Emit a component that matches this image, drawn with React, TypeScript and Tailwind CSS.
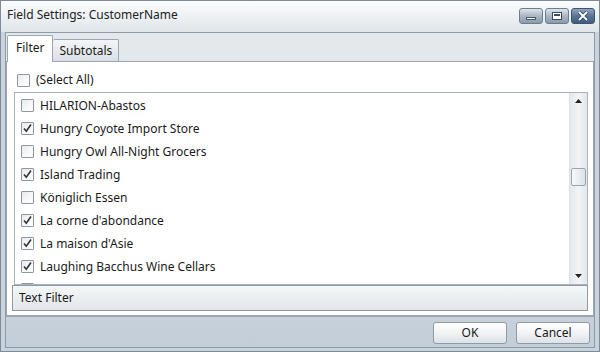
import { useState } from "react";

const items = [
  { label: "HILARION-Abastos", checked: false },
  { label: "Hungry Coyote Import Store", checked: true },
  { label: "Hungry Owl All-Night Grocers", checked: false },
  { label: "Island Trading", checked: true },
  { label: "Königlich Essen", checked: false },
  { label: "La corne d'abondance", checked: true },
  { label: "La maison d'Asie", checked: true },
  { label: "Laughing Bacchus Wine Cellars", checked: true },
];

function Check({ checked }: { checked: boolean }) {
  return (
    <span className="relative w-[13px] h-[13px] shrink-0 border border-[#8f98a2] rounded-[1px] bg-gradient-to-br from-[#e6e9ec] via-[#f6f7f8] to-white">
      {checked && (
        <svg width="11" height="11" viewBox="0 0 11 11" className="absolute left-0 top-0">
          <path d="M2 5.5 L4.3 8.2 L9 1.5" fill="none" stroke="#333" strokeWidth="1.6" />
        </svg>
      )}
    </span>
  );
}

function TitleButton({ kind }: { kind: "min" | "max" | "close" }) {
  const close = kind === "close";
  return (
    <div
      className={
        "w-[24px] h-[16px] rounded-[3px] border flex items-center justify-center " +
        (close
          ? "border-[#3c5470] bg-gradient-to-b from-[#8fa5bd] via-[#5b7595] to-[#3f5b7d]"
          : "border-[#6d7d8e] bg-gradient-to-b from-[#dfe5eb] via-[#a9b6c4] to-[#8c9bab]")
      }
    >
      {kind === "min" && <span className="block w-[10px] h-[3px] mt-[5px] bg-white border border-[#4a5868]" />}
      {kind === "max" && (
        <span className="block w-[10px] h-[8px] border border-[#3f4c5a] bg-white">
          <span className="block mx-auto mt-[1px] w-[6px] h-[2px] bg-[#3f4c5a]" />
        </span>
      )}
      {kind === "close" && (
        <svg width="12" height="10" viewBox="0 0 12 10">
          <path d="M2 1 L10 9 M10 1 L2 9" stroke="#2b3f57" strokeWidth="3.4" />
          <path d="M2 1 L10 9 M10 1 L2 9" stroke="white" strokeWidth="2" />
        </svg>
      )}
    </div>
  );
}

export default function App() {
  const [tab, setTab] = useState<"Filter" | "Subtotals">("Filter");
  const font = { fontFamily: "'Noto Sans', 'Open Sans', sans-serif" };

  return (
    <div
      className="w-[600px] h-[352px] border border-[#7f8b97] bg-[#c9d3dd] flex flex-col text-[12px] text-[#1b1b1b] overflow-hidden"
      style={font}
    >
      {/* Title bar */}
      <div className="h-[31px] shrink-0 flex items-center pl-[6px] pr-[4px] bg-gradient-to-b from-[#fbfcfd] via-[#eef1f4] to-[#dfe5ea]">
        <span className="text-[12px] text-[#222] -mt-[3px]">Field Settings: CustomerName</span>
        <div className="ml-auto flex gap-[2px] -mt-[2px]">
          <TitleButton kind="min" />
          <TitleButton kind="max" />
          <TitleButton kind="close" />
        </div>
      </div>

      {/* Body */}
      <div className="flex-1 flex flex-col mx-[4px] mb-[5px] border border-[#8e9aa6] bg-gradient-to-b from-[#dfe5eb] to-[#c4ced8]">
        <div className="flex-1 flex flex-col bg-[#e3e8ed] pt-[2px] border-b border-[#9aa5b1]">
          {/* Tabs */}
          <div className="h-[26px] flex items-end pl-[1px]">
            <button
              onClick={() => setTab("Filter")}
              className={
                "px-[8px] border border-b-0 border-[#9ca6b1] rounded-t-[2px] text-left " +
                (tab === "Filter" ? "bg-white relative z-10 -mb-px h-[27px]" : "bg-gradient-to-b from-[#f4f6f8] to-[#d9dfe5] h-[22px]")
              }
            >
              <span className="-mt-[3px] block">Filter</span>
            </button>
            <button
              onClick={() => setTab("Subtotals")}
              className={
                "px-[6px] border border-b-0 border-l-0 border-[#9ca6b1] rounded-t-[2px] " +
                (tab === "Subtotals" ? "bg-white relative z-10 -mb-px h-[27px]" : "bg-gradient-to-b from-[#f4f6f8] to-[#d9dfe5] h-[22px]")
              }
            >
              Subtotals
            </button>
          </div>

          {/* Panel */}
          <div className="h-[255px] bg-white border border-[#9ca6b1] flex flex-col pl-[7px] pr-[5px]">
            <div className="h-[30px] flex items-center gap-[6px] pl-[3px] pt-[6px]">
              <Check checked={false} />
              <span>(Select All)</span>
            </div>

            {/* List */}
            <div className="h-[193px] border border-[#a9b3bd] flex overflow-hidden">
              <div className="flex-1 flex flex-col pt-[1px] overflow-hidden">
                {items.map((it) => (
                  <div key={it.label} className="h-[23px] shrink-0 flex items-center gap-[6px] pl-[6px]">
                    <Check checked={it.checked} />
                    <span>{it.label}</span>
                  </div>
                ))}
                <div className="h-[23px] shrink-0 flex items-center pl-[6px]">
                  <Check checked={false} />
                </div>
              </div>
              {/* Scrollbar */}
              <div className="w-[18px] shrink-0 border-l border-[#dde2e7] bg-gradient-to-r from-[#e4e8ec] via-[#f2f4f6] to-[#e4e8ec] flex flex-col items-center">
                <svg width="7" height="4" viewBox="0 0 7 4" className="mt-[6px]">
                  <path d="M0 4 L3.5 0 L7 4 Z" fill="#222" />
                </svg>
                <div className="mt-[65px] w-[15px] h-[18px] rounded-[2px] border border-[#9aa4ae] bg-gradient-to-r from-[#f8f9fa] to-[#dde2e7]" />
                <svg width="7" height="4" viewBox="0 0 7 4" className="mt-auto mb-[6px]">
                  <path d="M0 0 L3.5 4 L7 0 Z" fill="#222" />
                </svg>
              </div>
            </div>

            {/* Text filter */}
            <div className="h-[26px] -ml-[2px] pl-[6px] flex items-center border border-[#8e99a4] bg-gradient-to-b from-[#f5f7f8] to-[#e1e6ea]">
              Text Filter
            </div>
          </div>
        </div>

        {/* Footer */}
        <div className="h-[30px] flex items-center justify-end gap-[9px] pr-[4px] pt-[1px]">
          <button className="w-[74px] h-[22px] rounded-[3px] border border-[#8f9aa5] bg-gradient-to-b from-white via-[#f1f3f5] to-[#dde2e7]">
            OK
          </button>
          <button className="w-[74px] h-[22px] rounded-[3px] border border-[#8f9aa5] bg-gradient-to-b from-white via-[#f1f3f5] to-[#dde2e7]">
            Cancel
          </button>
        </div>
      </div>
    </div>
  );
}
